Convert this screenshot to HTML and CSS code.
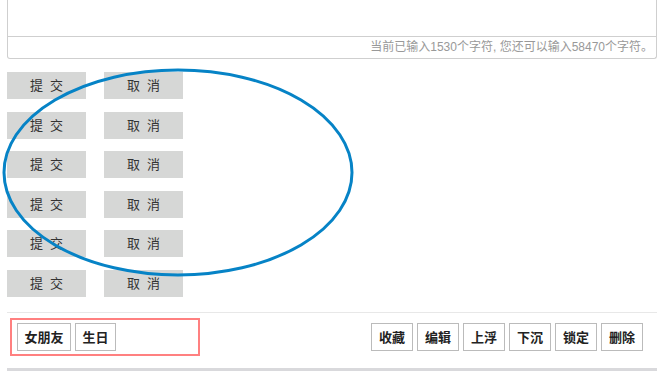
FILE: index.html
```html
<!DOCTYPE html>
<html lang="zh">
<head>
<meta charset="utf-8">
<link rel="stylesheet" href="styles.css">
</head>
<body>
<div class="page">
  <div class="editor">
    <div class="editor-area"></div>
    <div class="counter">当前已输入1530个字符, 您还可以输入58470个字符。</div>
  </div>

  <div class="rows">
    <div class="row"><span class="btn">提交</span><span class="btn">取消</span></div>
    <div class="row"><span class="btn">提交</span><span class="btn">取消</span></div>
    <div class="row"><span class="btn">提交</span><span class="btn">取消</span></div>
    <div class="row"><span class="btn">提交</span><span class="btn">取消</span></div>
    <div class="row"><span class="btn">提交</span><span class="btn">取消</span></div>
    <div class="row"><span class="btn">提交</span><span class="btn">取消</span></div>
    <svg class="circle" width="360" height="220" viewBox="0 0 360 220">
      <ellipse cx="178" cy="107.5" rx="174" ry="102.5" fill="none" stroke="#0683c6" stroke-width="3"/>
    </svg>
  </div>

  <div class="toolbar">
    <div class="tags">
      <span class="tag">女朋友</span>
      <span class="tag">生日</span>
    </div>
    <div class="actions">
      <span class="tag act">收藏</span>
      <span class="tag act">编辑</span>
      <span class="tag act">上浮</span>
      <span class="tag act">下沉</span>
      <span class="tag act">锁定</span>
      <span class="tag act">删除</span>
    </div>
  </div>
</div>
</body>
</html>
```

FILE: styles.css
```css
html, body {
  margin: 0;
  padding: 0;
  background: #fff;
}
body {
  font-family: "Liberation Sans", "Noto Sans CJK SC", sans-serif;
  color: #333;
}
.page {
  width: 650px;
  margin-left: 7px;
  position: relative;
}
.editor {
  border: 1px solid #cfcfcf;
  border-top: none;
  border-radius: 0 0 3px 3px;
}
.editor-area {
  height: 36px;
  border-bottom: 1px solid #cfcfcf;
}
.counter {
  height: 21px;
  font-size: 12px;
  line-height: 21px;
  color: #999;
  text-align: right;
  padding-right: 3px;
}
.rows {
  position: relative;
  margin-top: 13px;
  display: flex;
  flex-direction: column;
  gap: 12.6px;
}
.row {
  display: flex;
  gap: 18px;
}
.btn {
  width: 79px;
  height: 27px;
  background: #d6d7d6;
  font-size: 13px;
  line-height: 27px;
  text-align: center;
  letter-spacing: 7px;
  text-indent: 7px;
  color: #333;
}
.circle {
  position: absolute;
  left: -7px;
  top: -7px;
}
.toolbar {
  margin-top: 15px;
  border-top: 1px solid #e8e8e8;
  padding: 5px 14px 0 3px;
  height: 50px;
  display: flex;
  justify-content: space-between;
  align-items: flex-start;
  border-bottom: 3px solid #d9d9dc;
}
.tags {
  width: 176px;
  height: 28px;
  border: 2px solid #ff8080;
  padding: 3px 5px;
  display: flex;
  gap: 4px;
}
.tag {
  height: 26px;
  border: 1px solid #bbb;
  padding: 0 6.5px;
  font-family: "Noto Sans CJK SC", sans-serif;
  font-size: 13px;
  font-weight: bold;
  line-height: 26px;
  color: #222;
  background: #fff;
}
.actions {
  margin-top: 5px;
  display: flex;
  gap: 4px;
}
.act {
  width: 40px;
  padding: 0;
  text-align: center;
}
```
